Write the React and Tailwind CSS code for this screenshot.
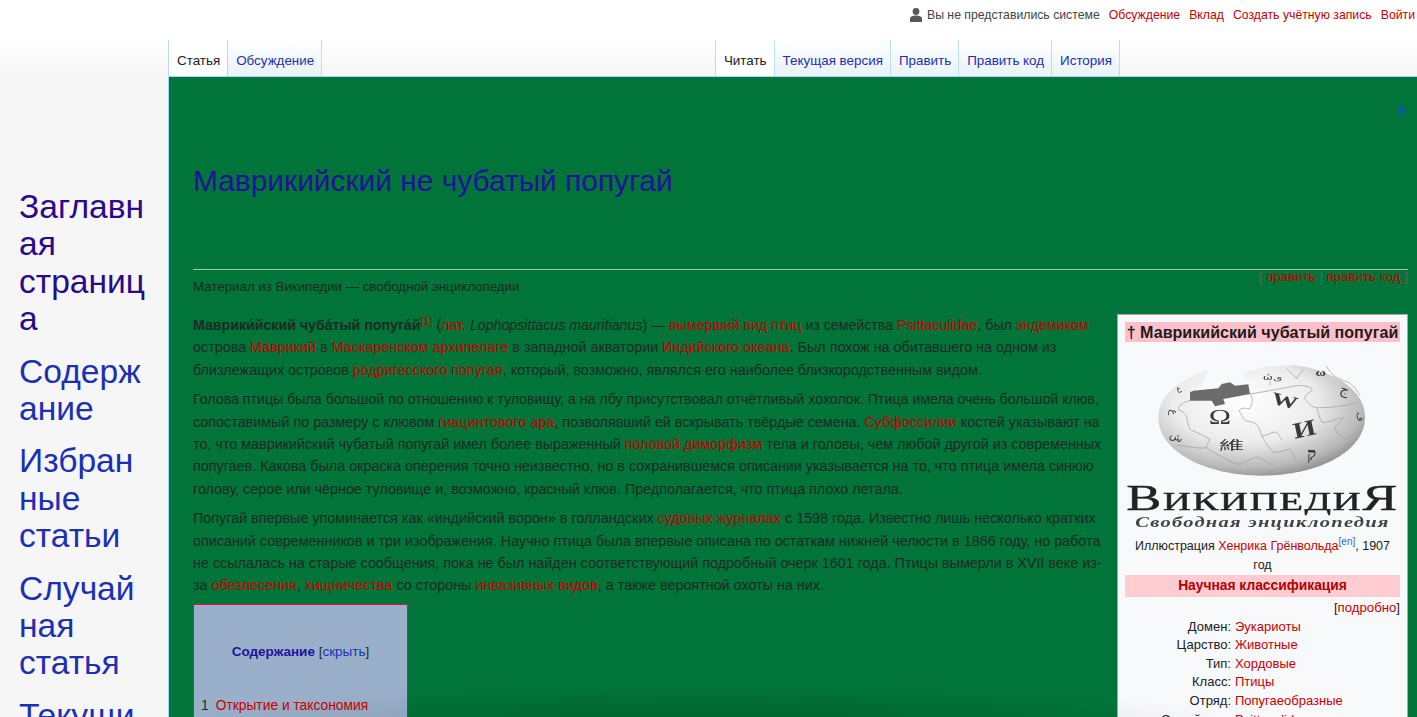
import React from 'react';

const navItems = [
  { label: 'Заглавная страница', color: 'text-[#2a0a8c]' },
  { label: 'Содержание', color: 'text-[#1c30b4]' },
  { label: 'Избранные статьи', color: 'text-[#1c30b4]' },
  { label: 'Случайная статья', color: 'text-[#1c30b4]' },
  { label: 'Текущие события', color: 'text-[#1c30b4]' },
];

const taxonomy = [
  ['Домен:', 'Эукариоты'],
  ['Царство:', 'Животные'],
  ['Тип:', 'Хордовые'],
  ['Класс:', 'Птицы'],
  ['Отряд:', 'Попугаеобразные'],
  ['Семейство:', 'Psittaculidae'],
];

function Red({ children }) {
  return <a className="text-[#c80000]">{children}</a>;
}

function Tab({ active, children }) {
  return (
    <div className={`flex h-[36px] items-end border-r border-[#bcdcf5] pb-[7px] pl-2 pr-[7px] text-[13.4px] leading-[16px] ${active ? 'bg-white text-[#202122]' : 'bg-gradient-to-b from-white to-[#e8f2f8] text-[#1c30b4]'}`}>
      {children}
    </div>
  );
}

// coordinates follow a 3x crop of the logo, hence the odd viewBox
function Globe() {
  return (
    <svg width="275" height="128" viewBox="-15 15 825 384" className="mx-auto block blur-[0.5px]">
      <defs>
        <radialGradient id="ball" cx="0.42" cy="0.36" r="0.7">
          <stop offset="0" stopColor="#ffffff" />
          <stop offset="0.5" stopColor="#ececec" />
          <stop offset="0.82" stopColor="#b8b8b8" />
          <stop offset="1" stopColor="#828282" />
        </radialGradient>
      </defs>
      <path d="M85 205 C85 110 230 40 395 40 C560 40 705 100 705 205 C705 310 560 380 395 380 C230 380 85 310 85 205 Z" fill="url(#ball)" />
      <path d="M250 30 L215 110 L185 128 L265 118 L360 105 L385 95 L340 90 L340 70 L400 55 L525 46 L535 20 L250 20 Z" fill="#f8f9fa" />
      <path d="M180 130 L190 125 L265 118 L275 105 L300 100 L315 110 L355 106 L360 135 L280 150 L285 165 L255 172 L245 155 L180 155 Z" fill="#6c6c6c" />
      <g fill="none" stroke="#a6a6a6" strokeWidth="2.4">
        <path d="M360 135 C372 150 366 170 358 180 C340 174 322 180 330 190 C340 204 340 214 350 216 C372 220 386 222 395 260 C410 262 428 246 440 250 C452 258 448 268 456 272" />
        <path d="M360 135 L420 125 L500 110 C528 108 552 116 545 126 C522 138 520 150 532 158 C542 172 556 178 570 176 C610 176 650 170 680 160" />
        <path d="M180 155 C160 160 142 170 146 182 C160 188 172 198 170 206 C174 222 176 238 182 242 C204 252 224 262 240 270 C238 280 228 286 230 296 C250 312 272 322 290 330 C306 340 320 348 332 345 C350 340 370 322 385 325 C402 332 416 344 430 350" />
        <path d="M500 90 C506 78 514 70 520 60 M420 110 L420 95 M470 60 C482 70 496 82 500 90" />
        <path d="M560 176 C566 192 568 208 576 220 C596 222 622 208 640 205 C636 216 616 228 615 240 C622 252 632 262 640 270 C660 262 682 250 700 240" />
        <path d="M395 260 C406 280 420 302 430 310 C446 312 466 302 480 300 C490 314 496 328 500 340" />
        <path d="M590 52 C596 66 610 84 640 95 C660 100 672 110 690 140" />
        <path d="M230 296 C204 300 176 292 140 288" />
      </g>
      <g fill="#3a3a3a" fontFamily="'Liberation Serif', serif" textAnchor="middle">
        <text transform="translate(270 226) scale(1.5 1)" fontSize="60">Ω</text>
        <text transform="translate(460 172) rotate(14) scale(1.5 1)" fontSize="53" fontWeight="700">W</text>
        <text transform="translate(528 262) rotate(-12) scale(1.3 1)" fontSize="68" fontWeight="700">И</text>
        <text transform="translate(305 303) scale(2 0.95)" fontSize="38" fontFamily="'Noto Sans CJK TC', serif">維</text>
        <text transform="translate(545 332)" fontSize="52" fontWeight="700">ק</text>
        <text transform="translate(640 135) rotate(20)" fontSize="42" fontFamily="'DejaVu Sans', serif">ج</text>
        <text transform="translate(428 92) scale(1.4 0.9)" fontSize="26" fontFamily="'DejaVu Sans', serif">ώی</text>
        <text transform="translate(572 82) scale(1.2 0.9)" fontSize="36" fontWeight="700">ω</text>
        <text transform="translate(124 190) rotate(90)" fontSize="30" fontFamily="'DejaVu Sans', serif">ع</text>
        <text transform="translate(135 272) rotate(30)" fontSize="32" fontFamily="'DejaVu Sans', serif">ش</text>
        <text transform="translate(682 205) rotate(80)" fontSize="28" fontFamily="'DejaVu Sans', serif">ف</text>
        <text transform="translate(148 125) rotate(-25)" fontSize="24" fontFamily="'DejaVu Sans', serif">ع</text>
      </g>
    </svg>
  );
}

function Infobox() {
  return (
    <div className="float-right ml-[14px] w-[291px] border border-[#a2a9b1] bg-[#f8f9fa] p-[7px] text-[12.6px] leading-[18.6px] text-[#202122]">
      <div className="bg-[#ffc0cb] text-center text-[16.1px] font-bold leading-[20px] text-[#1c1c1c]">† Маврикийский чубатый попугай</div>
      <div className="mt-[12px]">
        <Globe />
        <div className="mt-[4px] scale-x-[1.5] whitespace-nowrap text-center font-['Liberation_Serif',serif] leading-[26px] tracking-[1px] text-[#222] blur-[0.3px] [-webkit-text-stroke:0.4px_#222]">
          <span className="text-[35px]">В</span>
          <span className="text-[26px]">ИКИПЕДИ</span>
          <span className="text-[35px]">Я</span>
        </div>
        <div className="-mt-[3px] scale-x-[1.37] whitespace-nowrap text-center font-['Liberation_Serif',serif] text-[15px] font-bold italic leading-[13px] tracking-[0.9px] text-[#444] blur-[0.4px]">
          Свободная энциклопедия
        </div>
      </div>
      <div className="mt-[8px] text-center text-[12.5px] leading-[19px]">
        Иллюстрация <Red>Хенрика Грёнвольда</Red>
        <sup className="text-[10px] text-[#3366cc]">[en]</sup>, 1907 год
      </div>
      <div className="bg-[#ffccd2] text-center text-[13.8px] font-bold leading-[22px] text-[#b00000]">Научная классификация</div>
      <div className="mt-[2px] text-right text-[13.2px]">[<Red>подробно</Red>]</div>
      <div className="text-[13px]">
        {taxonomy.map(([name, value]) => (
          <div key={name} className="flex gap-[4px]">
            <div className="w-[106px] text-right">{name}</div>
            <Red>{value}</Red>
          </div>
        ))}
      </div>
    </div>
  );
}

export default function App() {
  return (
    <div className="relative h-screen overflow-hidden bg-white font-['Liberation_Sans',Arial,sans-serif]">
      <div className="flex h-[30px] items-center justify-end gap-[9px] pr-[2px] text-[12.25px] text-[#c80000]">
        <div className="flex items-center gap-[5px] text-[#444]">
          <svg width="12" height="14" viewBox="0 0 12 14" fill="#54595d">
            <circle cx="6" cy="3.5" r="3.4" />
            <path d="M0 14 V11 C0 8.6 3 7.6 6 7.6 C9 7.6 12 8.6 12 11 V14 Z" />
          </svg>
          <span>Вы не представились системе</span>
        </div>
        <a>Обсуждение</a>
        <a>Вклад</a>
        <a>Создать учётную запись</a>
        <a>Войти</a>
      </div>

      <div className="flex h-[46px] items-end justify-between bg-gradient-to-b from-white from-[20%] to-[#f6f6f6] pl-[168px] pr-[297px]">
        <div className="flex border-l border-[#bcdcf5]">
          <Tab active>Статья</Tab>
          <Tab>Обсуждение</Tab>
        </div>
        <div className="flex border-l border-[#bcdcf5]">
          <Tab active>Читать</Tab>
          <Tab>Текущая версия</Tab>
          <Tab>Править</Tab>
          <Tab>Править код</Tab>
          <Tab>История</Tab>
        </div>
      </div>

      <div className="flex">
        <nav className="w-[168px] shrink-0 bg-[#f6f6f6] pb-[40px] pl-[19px] pr-[20px] pt-[112px] text-[33.6px] leading-[37.4px]">
          {navItems.map((item) => (
            <div key={item.label} className={`mb-[15px] break-words ${item.color}`}>{item.label}</div>
          ))}
        </nav>

        <main className="relative min-w-0 flex-1 border-l border-t border-[#a7d7f9] bg-[#007439] pb-[40px] pl-[24px] pr-[9px] text-[14.35px] leading-[22.4px] text-[#1e2a24]">
          <svg width="13" height="13" viewBox="0 0 24 24" fill="#0a5c94" className="absolute right-[9px] top-[26px]">
            <path d="M12 1 L15 9 L23 9.5 L17 15 L19 23 L12 18.5 L5 23 L7 15 L1 9.5 L9 9 Z" />
          </svg>

          <h1 className="border-b border-[#a2c8b0] pb-[70px] pt-[86px] text-[29.9px] leading-[36px] text-[#20129a]">
            Маврикийский не чубатый попугай
          </h1>
          <div className="float-right -mt-[1px] text-[13.3px] leading-[15px] text-[#5a6a60]">
            [ <Red>править</Red> | <Red>править код</Red> ]
          </div>
          <div className="pt-[7px] text-[13.3px] leading-[20px]">Материал из Википедии — свободной энциклопедии</div>

          <div className="clear-both pt-[17px]">
            <Infobox />
            <p className="whitespace-nowrap">
              <span className="text-[14.18px]">
                <b>Маврики́йский чуба́тый попуга́й</b><sup className="text-[11px] leading-none text-[#c80000]">[1]</sup> (<Red>лат.</Red> <i>Lophopsittacus mauritianus</i>) — <Red>вымерший вид птиц</Red> из семейства <Red>Psittaculidae</Red>, был <Red>эндемиком</Red>
              </span><br />
              острова <Red>Маврикий</Red> в <Red>Маскаренском архипелаге</Red> в западной акватории <Red>Индийского океана</Red>. Был похож на обитавшего на одном из<br />
              близлежащих островов <Red>родригесского попугая</Red>, который, возможно, являлся его наиболее близкородственным видом.
            </p>
            <p className="mt-[7px] whitespace-nowrap">
              <span className="text-[14.2px]">Голова птицы была большой по отношению к туловищу, а на лбу присутствовал отчётливый хохолок. Птица имела очень большой клюв,</span><br />
              сопоставимый по размеру с клювом <Red>гиацинтового ара</Red>, позволявший ей вскрывать твёрдые семена. <Red>Субфоссилии</Red> костей указывают на<br />
              то, что маврикийский чубатый попугай имел более выраженный <Red>половой диморфизм</Red> тела и головы, чем любой другой из современных<br />
              попугаев. Какова была окраска оперения точно неизвестно, но в сохранившемся описании указывается на то, что птица имела синюю<br />
              голову, серое или чёрное туловище и, возможно, красный клюв. Предполагается, что птица плохо летала.
            </p>
            <p className="mt-[7px] whitespace-nowrap">
              Попугай впервые упоминается как «индийский ворон» в голландских <Red>судовых журналах</Red> с 1598 года. Известно лишь несколько кратких<br />
              описаний современников и три изображения. Научно птица была впервые описана по остаткам нижней челюсти в 1866 году, но работа<br />
              не ссылалась на старые сообщения, пока не был найден соответствующий подробный очерк 1601 года. Птицы вымерли в XVII веке из-<br />
              за <Red>обезлесения</Red>, <Red>хищничества</Red> со стороны <Red>инвазивных видов</Red>, а также вероятной охоты на них.
            </p>

            <div className="mt-[7px] w-[215px] border border-[#e0104a] bg-[#9ab0ca] px-[7px] pt-[36px] text-[13.8px]">
              <div className="text-center text-[13.5px]">
                <b className="text-[#20129a]">Содержание</b> [<a className="text-[#1c30b4]">скрыть</a>]
              </div>
              <div className="mt-[32px] flex gap-[7px]">
                <span>1</span>
                <Red>Открытие и таксономия</Red>
              </div>
            </div>
          </div>
        </main>
      </div>

      <div className="pointer-events-none absolute bottom-0 left-[169px] h-[30px] w-[1070px] bg-[radial-gradient(ellipse_at_bottom,rgba(0,0,0,0.14),transparent_70%)]" />
    </div>
  );
}
